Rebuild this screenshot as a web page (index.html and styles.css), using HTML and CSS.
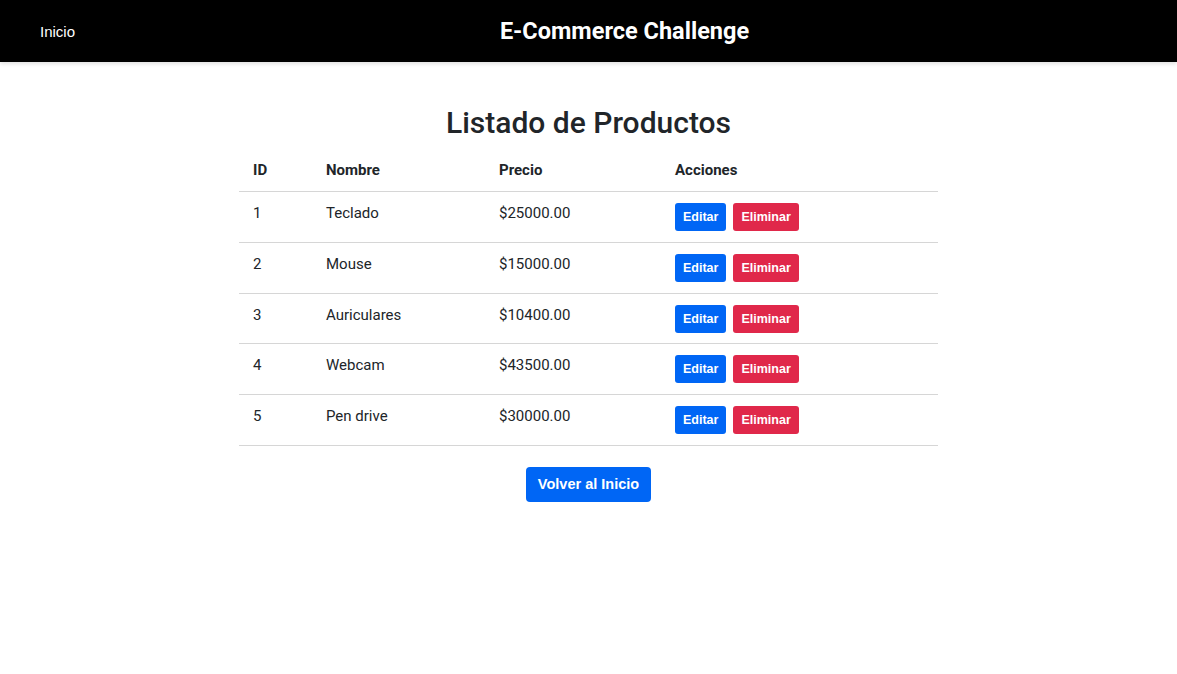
FILE: index.html
```html
<!DOCTYPE html>
<html lang="es">
<head>
<meta charset="utf-8">
<title>E-Commerce Challenge</title>
<link rel="stylesheet" href="styles.css">
</head>
<body>
<header class="topbar">
  <a class="topbar-link" href="#">Inicio</a>
  <h1 class="topbar-title">E-Commerce Challenge</h1>
</header>
<main class="content">
  <h2 class="page-title">Listado de Productos</h2>
  <table class="products">
    <thead>
      <tr><th class="c-id">ID</th><th class="c-name">Nombre</th><th class="c-price">Precio</th><th class="c-act">Acciones</th></tr>
    </thead>
    <tbody>
      <tr><td>1</td><td>Teclado</td><td>$25000.00</td><td><div class="actions"><button class="btn btn-blue">Editar</button><button class="btn btn-red">Eliminar</button></div></td></tr>
      <tr><td>2</td><td>Mouse</td><td>$15000.00</td><td><div class="actions"><button class="btn btn-blue">Editar</button><button class="btn btn-red">Eliminar</button></div></td></tr>
      <tr><td>3</td><td>Auriculares</td><td>$10400.00</td><td><div class="actions"><button class="btn btn-blue">Editar</button><button class="btn btn-red">Eliminar</button></div></td></tr>
      <tr><td>4</td><td>Webcam</td><td>$43500.00</td><td><div class="actions"><button class="btn btn-blue">Editar</button><button class="btn btn-red">Eliminar</button></div></td></tr>
      <tr><td>5</td><td>Pen drive</td><td>$30000.00</td><td><div class="actions"><button class="btn btn-blue">Editar</button><button class="btn btn-red">Eliminar</button></div></td></tr>
    </tbody>
  </table>
  <button class="btn btn-blue btn-lg">Volver al Inicio</button>
</main>
</body>
</html>
```

FILE: styles.css
```css
html, body {
  margin: 0;
  padding: 0;
  background: #fff;
}
body {
  font-family: "Roboto", "Open Sans", sans-serif;
  color: #212529;
}
.topbar {
  height: 62px;
  background: #000;
  display: flex;
  align-items: center;
  position: relative;
  box-shadow: 0 2px 4px rgba(0,0,0,0.12);
  padding: 0 40px;
}
.topbar-link {
  color: #fff;
  text-decoration: none;
  font-family: "Liberation Sans", Arial, sans-serif;
  font-size: 15px;
}
.topbar-title {
  position: absolute;
  left: 0;
  right: 0;
  margin: 0;
  text-align: center;
  padding-left: 72px;
  color: #fff;
  font-size: 23.5px;
  font-weight: 700;
  pointer-events: none;
}
.content {
  display: flex;
  flex-direction: column;
  align-items: center;
  padding-top: 40px;
}
.page-title {
  margin: 0 0 8px;
  font-size: 30px;
  font-weight: 500;
  line-height: 42px;
}
.products {
  width: 699px;
  border-collapse: collapse;
  font-size: 15px;
  margin-bottom: 21px;
}
.products th {
  text-align: left;
  font-weight: 700;
  padding: 9px 14px 12px;
  line-height: 18px;
  border-bottom: 1px solid #d6d6d6;
}
.products td {
  padding: 11px 14px 10.75px;
  line-height: 20px;
  vertical-align: top;
  border-bottom: 1px solid #d6d6d6;
}
.c-id { width: 45px; }
.c-name { width: 145px; }
.c-price { width: 148px; }
.actions {
  display: flex;
  gap: 7px;
}
.btn {
  border: none;
  border-radius: 3px;
  color: #fff;
  font-family: "Liberation Sans", Arial, sans-serif;
  font-weight: 700;
  font-size: 12.5px;
  height: 28px;
  padding: 0 8px;
  cursor: pointer;
}
.btn-blue { background: #0066f5; }
.btn-red { background: #e0284a; }
.btn-lg {
  height: 35px;
  font-size: 14.5px;
  padding: 0 12px;
  border-radius: 4px;
}
```
